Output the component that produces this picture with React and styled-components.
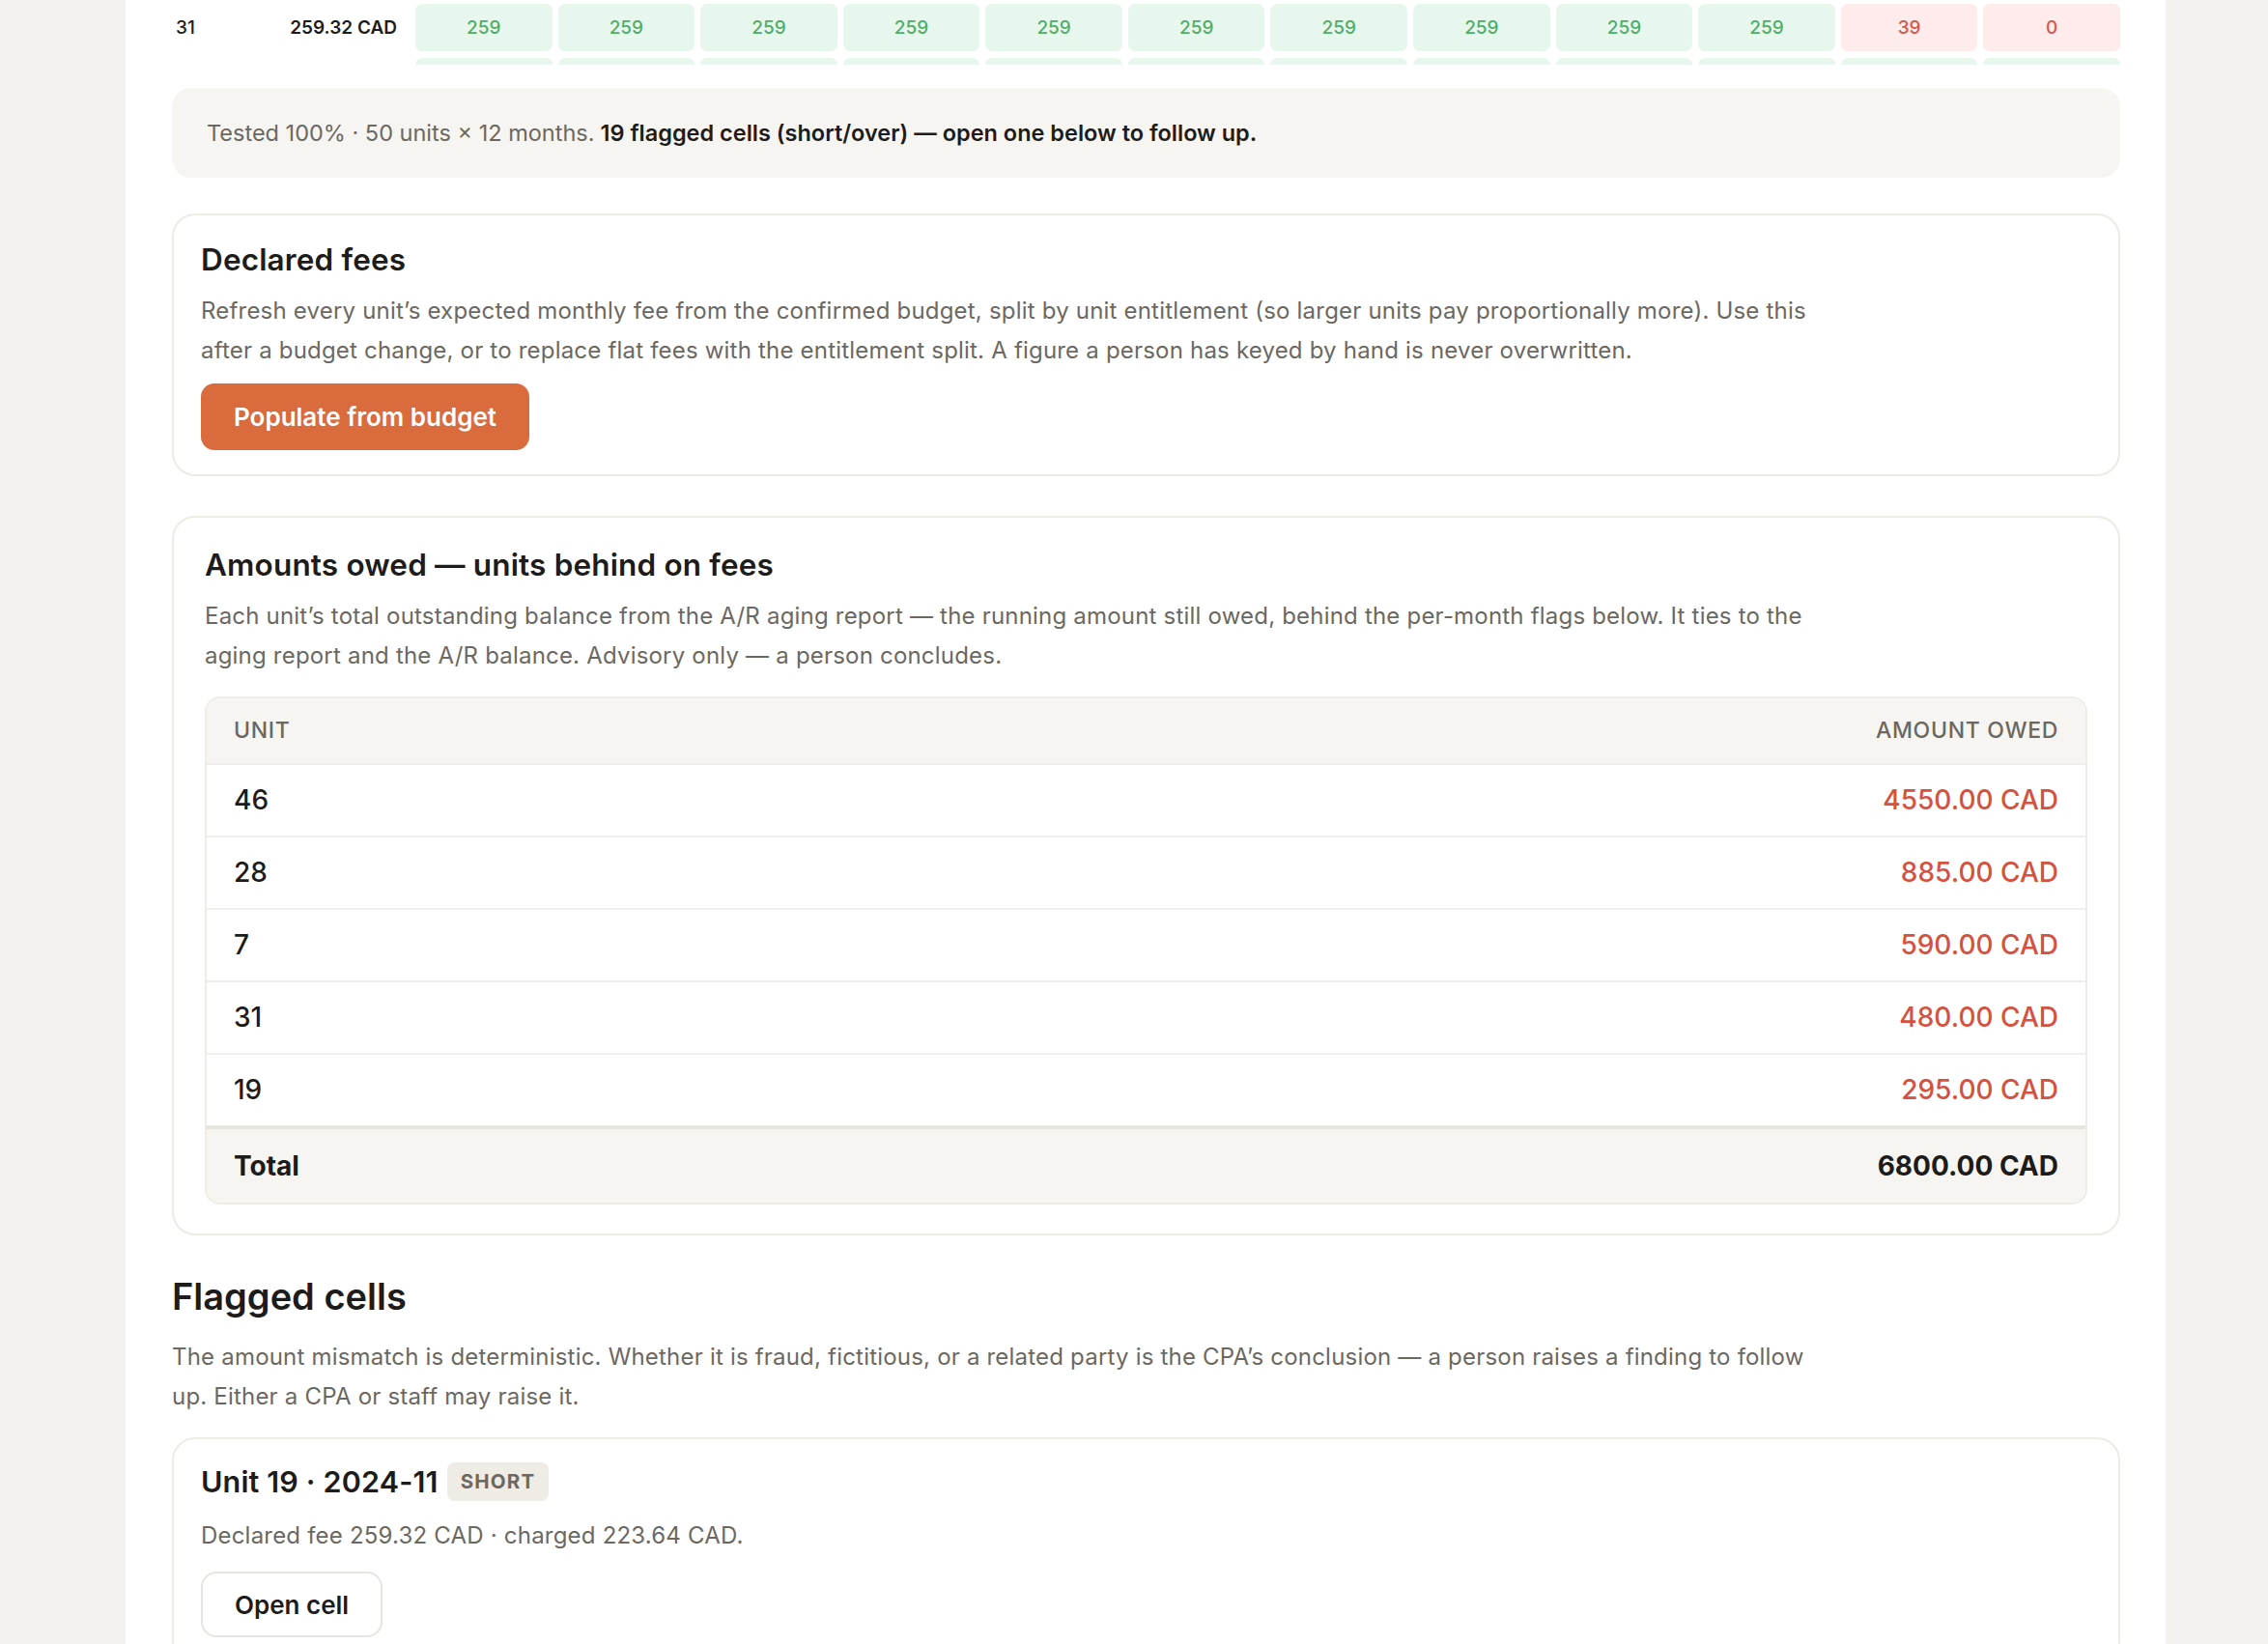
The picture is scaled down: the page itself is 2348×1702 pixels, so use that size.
import React from "react";
import styled, { createGlobalStyle } from "styled-components";

const GlobalStyle = createGlobalStyle`
  * { box-sizing: border-box; }
  html, body { margin: 0; padding: 0; }
  body {
    background: #f3f2ee;
    font-family: "Inter", "Noto Sans", sans-serif;
    color: #1d1c1a;
    -webkit-font-smoothing: antialiased;
  }
`;

const Page = styled.div`
  min-height: 100vh;
  padding: 0 106px 0 130px;
`;

const Main = styled.main`
  background: #ffffff;
  min-height: 100vh;
  padding: 0 47px 80px 48px;
`;

const MatrixViewport = styled.div`
  height: 67px;
  overflow: hidden;
  padding-top: 4px;
`;

const MatrixRows = styled.div`
  display: flex;
  flex-direction: column;
  gap: 7px;
`;

const MatrixRow = styled.div`
  display: grid;
  grid-template-columns: 110px 130px repeat(12, 1fr);
  column-gap: 6px;
  height: 49px;
  align-items: center;
`;

const UnitCell = styled.div`
  padding-left: 4px;
  font-size: 19px;
  font-weight: 500;
  color: #1d1c1a;
`;

const FeeCell = styled.div`
  text-align: right;
  padding-right: 13px;
  font-size: 19px;
  font-weight: 600;
  color: #1d1c1a;
  white-space: nowrap;
`;

const MonthCell = styled.div`
  height: 49px;
  border-radius: 7px;
  display: flex;
  align-items: center;
  justify-content: center;
  font-size: 19px;
  font-weight: 500;
  background: ${(p) => (p.$flag ? "#fdeceb" : "#e8f7ed")};
  color: ${(p) => (p.$flag ? "#d9564b" : "#4fae68")};
`;

const Notice = styled.div`
  margin-top: 24px;
  height: 93px;
  display: flex;
  align-items: center;
  padding: 0 36px;
  background: #f7f5f1;
  border-radius: 20px;
  font-size: 23.5px;
  color: #6b6862;
`;

const Strong = styled.strong`
  font-weight: 600;
  color: #1d1c1a;
  margin-left: 6px;
`;

const Card = styled.section`
  margin-top: ${(p) => p.$mt}px;
  border: 2px solid #eeebe5;
  border-radius: 24px;
  padding: ${(p) => p.$pt}px ${(p) => p.$px}px ${(p) => p.$pb}px;
`;

const CardTitle = styled.h2`
  margin: 0;
  font-size: ${(p) => p.$size || 31.5}px;
  line-height: 39px;
  font-weight: 600;
  color: #1d1c1a;
  letter-spacing: 0.005em;
`;

const Text = styled.p`
  margin: ${(p) => p.$mt || 13}px 0 0;
  max-width: 1700px;
  font-size: 24px;
  letter-spacing: 0.2px;
  line-height: 41px;
  color: #6b6862;
`;

const PrimaryButton = styled.button`
  margin-top: 14.5px;
  height: 69px;
  padding: 0 34px;
  border: none;
  border-radius: 14px;
  background: #d96b3c;
  color: #ffffff;
  font-family: inherit;
  font-size: 26px;
  font-weight: 600;
  cursor: pointer;
`;

const Table = styled.div`
  margin-top: 22px;
  border: 2px solid #efece7;
  border-radius: 16px;
  overflow: hidden;
`;

const TRow = styled.div`
  display: flex;
  align-items: center;
  justify-content: space-between;
  padding: 0 28px;
  height: ${(p) => p.$h}px;
  background: ${(p) => (p.$tint ? "#f7f5f1" : "#ffffff")};
  border-bottom: ${(p) => (p.$last ? "none" : "2px solid #f0eeea")};
  border-top: ${(p) => (p.$total ? "4px solid #e7e4df" : "none")};
`;

const HeadCell = styled.span`
  font-size: 23px;
  font-weight: 500;
  letter-spacing: 0.03em;
  text-transform: uppercase;
  color: #6b6862;
`;

const BodyCell = styled.span`
  font-size: 28px;
  font-weight: ${(p) => (p.$bold ? 700 : 500)};
  color: ${(p) => (p.$owed ? "#d4523f" : "#1d1c1a")};
`;

const SectionTitle = styled.h2`
  margin: 40px 0 0;
  font-size: 38px;
  line-height: 47px;
  font-weight: 600;
  color: #1d1c1a;
`;

const TitleLine = styled.div`
  display: flex;
  align-items: center;
  gap: 9px;
`;

const Badge = styled.span`
  height: 40px;
  display: inline-flex;
  align-items: center;
  padding: 0 14px;
  border-radius: 8px;
  background: #efebe5;
  color: #6b6862;
  font-size: 20.5px;
  font-weight: 700;
  letter-spacing: 0.06em;
`;

const GhostButton = styled.button`
  margin-top: 17px;
  height: 68px;
  padding: 0 33px;
  border: 2px solid #e8e5e0;
  border-radius: 16px;
  background: #ffffff;
  color: #1d1c1a;
  font-family: inherit;
  font-size: 26px;
  font-weight: 600;
  cursor: pointer;
`;

const months31 = [259, 259, 259, 259, 259, 259, 259, 259, 259, 259, 39, 0];
const monthsNext = [259, 259, 259, 259, 259, 259, 259, 259, 259, 259, 259, 259];

const owed = [
  ["46", "4550.00 CAD"],
  ["28", "885.00 CAD"],
  ["7", "590.00 CAD"],
  ["31", "480.00 CAD"],
  ["19", "295.00 CAD"],
];

const flagged = [
  { unit: "19", month: "2024-11", kind: "SHORT", declared: "259.32", charged: "223.64" },
  { unit: "31", month: "2024-11", kind: "SHORT", declared: "259.32", charged: "39.00" },
  { unit: "31", month: "2024-12", kind: "SHORT", declared: "259.32", charged: "0.00" },
];

export default function App() {
  return (
    <>
      <GlobalStyle />
      <Page>
        <Main>
          <MatrixViewport>
            <MatrixRows>
              <MatrixRow>
                <UnitCell>31</UnitCell>
                <FeeCell>259.32 CAD</FeeCell>
                {months31.map((v, i) => (
                  <MonthCell key={i} $flag={i >= 10}>{v}</MonthCell>
                ))}
              </MatrixRow>
              <MatrixRow>
                <UnitCell>32</UnitCell>
                <FeeCell>259.32 CAD</FeeCell>
                {monthsNext.map((v, i) => (
                  <MonthCell key={i}>{v}</MonthCell>
                ))}
              </MatrixRow>
            </MatrixRows>
          </MatrixViewport>

          <Notice>
            Tested 100% · 50 units × 12 months.
            <Strong>19 flagged cells (short/over) — open one below to follow up.</Strong>
          </Notice>

          <Card $mt={37} $pt={25.5} $px={28} $pb={24.5}>
            <CardTitle>Declared fees</CardTitle>
            <Text>
              Refresh every unit’s expected monthly fee from the confirmed budget, split by unit
              entitlement (so larger units pay proportionally more). Use this after a budget change,
              or to replace flat fees with the entitlement split. A figure a person has keyed by hand
              is never overwritten.
            </Text>
            <PrimaryButton>Populate from budget</PrimaryButton>
          </Card>

          <Card $mt={41.5} $pt={28.5} $px={32} $pb={30.5}>
            <CardTitle>Amounts owed — units behind on fees</CardTitle>
            <Text>
              Each unit’s total outstanding balance from the A/R aging report — the running amount
              still owed, behind the per-month flags below. It ties to the aging report and the A/R
              balance. Advisory only — a person concludes.
            </Text>
            <Table>
              <TRow $h={69} $tint>
                <HeadCell>Unit</HeadCell>
                <HeadCell>Amount owed</HeadCell>
              </TRow>
              {owed.map(([u, a], i) => (
                <TRow key={u} $h={i === owed.length - 1 ? 73 : 75} $last={i === owed.length - 1}>
                  <BodyCell>{u}</BodyCell>
                  <BodyCell $owed>{a}</BodyCell>
                </TRow>
              ))}
              <TRow $h={80} $tint $total $last>
                <BodyCell $bold>Total</BodyCell>
                <BodyCell $bold>6800.00 CAD</BodyCell>
              </TRow>
            </Table>
          </Card>

          <SectionTitle>Flagged cells</SectionTitle>
          <Text $mt={17.5}>
            The amount mismatch is deterministic. Whether it is fraud, fictitious, or a related party
            is the CPA’s conclusion — a person raises a finding to follow up. Either a CPA or staff
            may raise it.
          </Text>

          {flagged.map((f, i) => (
            <Card key={i} $mt={i === 0 ? 22 : 24} $pt={24} $px={28} $pb={26}>
              <TitleLine>
                <CardTitle $size={30.5}>
                  Unit {f.unit} · {f.month}
                </CardTitle>
                <Badge>{f.kind}</Badge>
              </TitleLine>
              <Text $mt={15.5}>
                Declared fee {f.declared} CAD · charged {f.charged} CAD.
              </Text>
              <GhostButton>Open cell</GhostButton>
            </Card>
          ))}
        </Main>
      </Page>
    </>
  );
}
